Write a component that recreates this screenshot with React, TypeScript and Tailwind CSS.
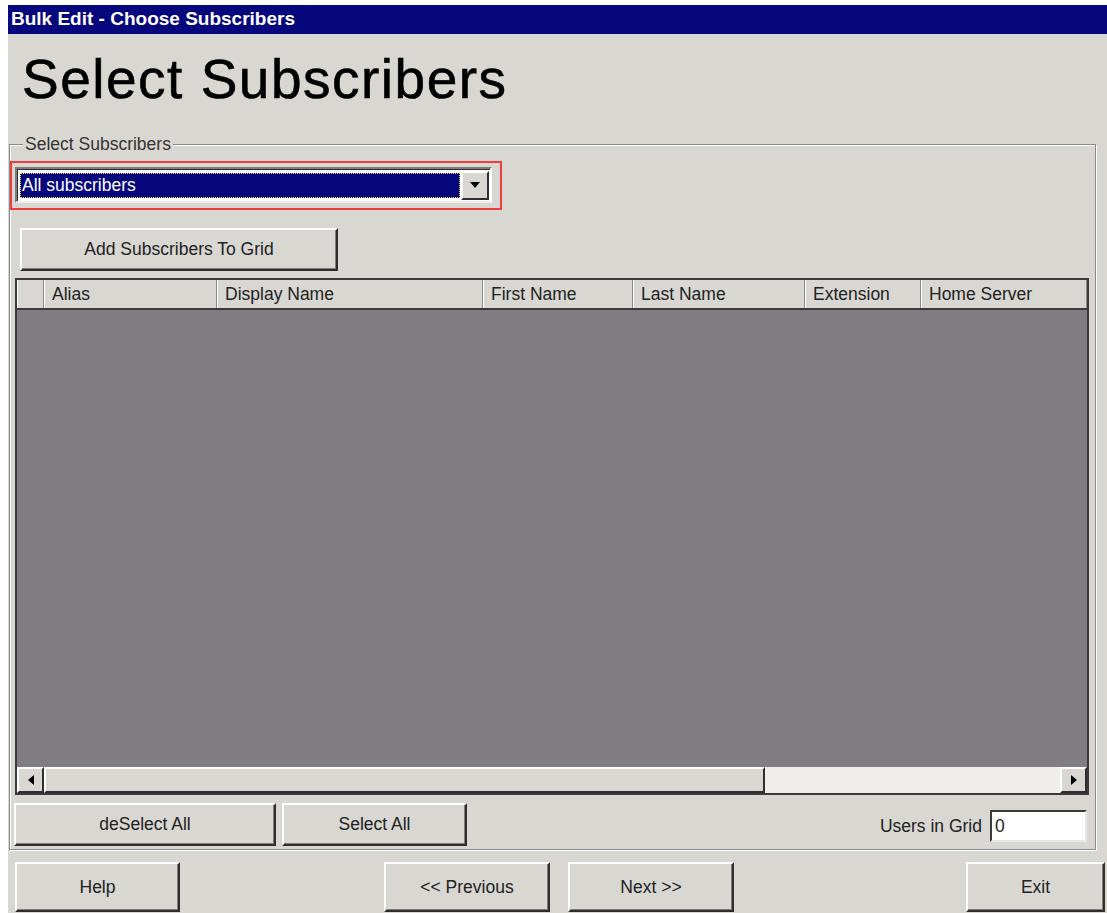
import type { ReactNode } from 'react';

// Classic raised 3D push button
const Btn = ({ children, className = '' }: { children: ReactNode; className?: string }) => (
  <button
    className={`flex items-center justify-center bg-[#d9d7d2] border-2 border-t-white border-l-white border-r-[#2e2e2e] border-b-[#2e2e2e] shadow-[inset_-1px_-1px_0_#7d7d7d] text-[17.5px] text-[#222] ${className}`}
  >
    {children}
  </button>
);

const columns = [
  { label: 'Alias', w: 'w-[173px]' },
  { label: 'Display Name', w: 'w-[266px]' },
  { label: 'First Name', w: 'w-[150px]' },
  { label: 'Last Name', w: 'w-[172px]' },
  { label: 'Extension', w: 'w-[116px]' },
  { label: 'Home Server', w: 'w-[166px]' },
];

const ScrollArrow = ({ dir }: { dir: 'left' | 'right' }) => (
  <div className="w-[27px] h-full flex items-center justify-center bg-[#d9d7d2] border-2 border-t-white border-l-white border-r-[#2e2e2e] border-b-[#2e2e2e]">
    <svg width="6" height="10" viewBox="0 0 6 10">
      {dir === 'left' ? <path d="M6 0 L0 5 L6 10 Z" fill="#000" /> : <path d="M0 0 L6 5 L0 10 Z" fill="#000" />}
    </svg>
  </div>
);

export default function App() {
  return (
    <div className="w-[1107px] h-[913px] bg-white overflow-hidden font-['Liberation_Sans',Arial,sans-serif]">
      <div className="ml-[8px] mt-[5px] w-[1099px] h-[908px] bg-[#d9d7d2] flex flex-col">
        {/* Title bar */}
        <div className="h-[29px] shrink-0 bg-[#06067d] text-white font-bold text-[19px] pl-[3px] flex items-center">
          Bulk Edit - Choose Subscribers
        </div>

        <h1 className="mt-[18px] ml-[14px] text-[55px] leading-none tracking-[1.5px] text-black [-webkit-text-stroke:0.6px_#000]">
          Select Subscribers
        </h1>

        {/* Group box */}
        <div className="relative mt-[37px] ml-[1px] w-[1087px] h-[706px] shrink-0 border border-[#8a8a8a] shadow-[1px_1px_0_#fff,inset_1px_1px_0_#fff] flex flex-col">
          <span className="absolute -top-[11px] left-[13px] px-[2px] bg-[#d9d7d2] text-[17.5px] leading-[20px] text-[#333]">
            Select Subscribers
          </span>

          {/* Subscriber picker */}
          <div className="mt-[16px] w-[492px] h-[49px] border-2 border-[#f03c3c] pl-[3px] pt-[4px]">
            <div className="w-[477px] h-[36px] flex items-center bg-white border-2 border-t-[#7d7d7d] border-l-[#7d7d7d] border-r-white border-b-[#efefef] shadow-[inset_1px_1px_0_#303030] pl-[3px] pr-[1px]">
              <div className="w-[442px] h-[25px] bg-[#06067d] border border-dotted border-[#e4dc4c] text-white text-[17.5px] leading-[23px] pl-[1px]">
                All subscribers
              </div>
              <div className="ml-[1px] w-[28px] h-[29px] flex items-center justify-center bg-[#d9d7d2] border-2 border-t-white border-l-white border-r-[#2e2e2e] border-b-[#2e2e2e]">
                <svg width="10" height="6" viewBox="0 0 10 6">
                  <path d="M0 0 L10 0 L5 6 Z" fill="#000" />
                </svg>
              </div>
            </div>
          </div>

          <Btn className="mt-[18px] ml-[10px] w-[318px] h-[43px] shrink-0">Add Subscribers To Grid</Btn>

          {/* Subscriber grid */}
          <div className="mt-[7px] ml-[5px] w-[1074px] h-[517px] shrink-0 border-2 border-[#3a3a3a] flex flex-col">
            <div className="h-[30px] shrink-0 flex border-b-2 border-[#3a3a3a]">
              <div className="w-[27px] h-full border-l border-l-white border-r border-r-[#8a8a8a]" />
              {columns.map((c) => (
                <div
                  key={c.label}
                  className={`${c.w} h-full border-l border-l-white border-r border-r-[#8a8a8a] pl-[7px] text-[17.5px] leading-[28px] text-[#222]`}
                >
                  {c.label}
                </div>
              ))}
            </div>
            <div className="flex-1 bg-[#807e83]" />
            <div className="h-[26px] shrink-0 flex">
              <ScrollArrow dir="left" />
              <div className="w-[721px] h-full bg-[#d9d7d2] border-2 border-t-white border-l-white border-r-[#2e2e2e] border-b-[#2e2e2e]" />
              <div className="flex-1 h-full bg-[#efeeea]" />
              <ScrollArrow dir="right" />
            </div>
          </div>

          {/* Selection actions */}
          <div className="mt-[8px] flex items-start">
            <Btn className="ml-[4px] w-[262px] h-[43px]">deSelect All</Btn>
            <Btn className="ml-[6px] w-[185px] h-[43px]">Select All</Btn>
            <div className="ml-auto mr-[8px] mt-[7px] flex items-center">
              <span className="text-[17.5px] text-[#222] mr-[8px]">Users in Grid</span>
              <div className="w-[97px] h-[32px] bg-white border-2 border-t-[#3a3a3a] border-l-[#3a3a3a] border-r-[#e8e8e8] border-b-[#e8e8e8] pl-[3px] text-[17.5px] leading-[28px] text-[#222]">
                0
              </div>
            </div>
          </div>
        </div>

        {/* Wizard navigation */}
        <div className="mt-[12px] flex">
          <Btn className="ml-[7px] w-[165px] h-[50px]">Help</Btn>
          <Btn className="ml-[204px] w-[166px] h-[50px]">&lt;&lt; Previous</Btn>
          <Btn className="ml-[18px] w-[166px] h-[50px]">Next &gt;&gt;</Btn>
          <Btn className="ml-[232px] w-[139px] h-[50px]">Exit</Btn>
        </div>
      </div>
    </div>
  );
}
